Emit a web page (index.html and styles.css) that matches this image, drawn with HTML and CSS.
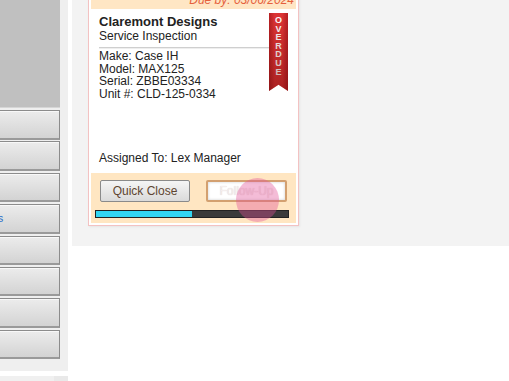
FILE: index.html
```html
<!DOCTYPE html>
<html lang="en">
<head>
  <meta charset="UTF-8" />
  <meta name="viewport" content="width=device-width, initial-scale=1.0"/>
  <title>Work Orders</title>
  <link rel="stylesheet" href="styles.css">
</head>
<body>
  <div class="page">

    <aside class="sidebar">
      <div class="sidebar-panel">
        <div class="sidebar-top"></div>
        <div class="nav">
          <div class="nav-btn"></div>
          <div class="nav-btn"></div>
          <div class="nav-btn"></div>
          <div class="nav-btn"><span class="nav-label">Forms</span></div>
          <div class="nav-btn"></div>
          <div class="nav-btn"></div>
          <div class="nav-btn"></div>
          <div class="nav-btn"></div>
        </div>
      </div>
      <div class="sidebar-panel sidebar-bottom"></div>
    </aside>

    <main class="content">
      <!-- Work order card -->
      <div class="card">
        <div class="card-header">Due by: 03/06/2024</div>

        <div class="card-body">
          <div class="card-title">
            <div class="company">Claremont Designs</div>
            <div class="service">Service Inspection</div>
          </div>
          <div class="details">
            <div>Make: Case IH</div>
            <div>Model: MAX125</div>
            <div>Serial: ZBBE03334</div>
            <div>Unit #: CLD-125-0334</div>
          </div>
          <div class="assigned">Assigned To: Lex Manager</div>
        </div>

        <div class="ribbon">
          <span>O</span><span>V</span><span>E</span><span>R</span><span>D</span><span>U</span><span>E</span>
        </div>

        <div class="card-footer">
          <div class="actions">
            <button class="btn btn-close">Quick Close</button>
            <button class="btn btn-follow" disabled>Follow-Up</button>
          </div>
          <div class="progress"><div class="progress-fill" style="width: 50%"></div></div>
          <div class="tap"></div>
        </div>
      </div>
    </main>

  </div>
</body>
</html>
```

FILE: styles.css
```css
body {
  margin: 0;
  font-family: "Liberation Sans", Arial, sans-serif;
  background: #fff;
  overflow: hidden;
}

.page {
  display: flex;
  align-items: flex-start;
  gap: 4px;
}

/* left column */
.sidebar {
  width: 68px;
  display: flex;
  flex-direction: column;
  gap: 5px;
}

.sidebar-panel {
  background: #efefef;
  height: 371px;
  padding-right: 8px;
  box-sizing: border-box;
}

.sidebar-bottom {
  height: 20px;
  background: linear-gradient(to right, #f0f0f0 80%, #e9e9e9 80%);
}

.sidebar-top {
  height: 107px;
  background: #c0c0c0;
  border-bottom: 1px solid #d6d6d6;
  margin-bottom: 2px;
}

.nav {
  display: flex;
  flex-direction: column;
  gap: 1.9px;
  margin-left: -2px;
}

.nav-btn {
  height: 29.5px;
  box-sizing: border-box;
  border: 1px solid #8c8c8c;
  border-bottom: 2px solid #9a9a9a;
  background: linear-gradient(#ececec, #d3d3d3);
  box-shadow: inset 1px 1px 0 #f8f8f8;
  display: flex;
  align-items: center;
  overflow: hidden;
}

.nav-label {
  font-size: 11px;
  color: #2a6fc9;
  margin-left: -27px;
}

/* main area */
.content {
  flex: 1;
  height: 246px;
  background: #f3f3f3;
  padding-left: 16px;
}

.card {
  position: relative;
  width: 211px;
  box-sizing: border-box;
  margin-top: -12px;
  border: 1px solid #f3c2c2;
  padding: 2px;
  background: #fff;
  box-shadow: 1px 1px 2px rgba(0,0,0,0.06);
}

.card-header {
  height: 18px;
  line-height: 18px;
  background: #ffe6c4;
  color: #e5603c;
  font-size: 12px;
  font-style: italic;
  text-align: right;
  padding-right: 2px;
}

.card-body {
  height: 164px;
  box-sizing: border-box;
  display: flex;
  flex-direction: column;
  padding: 5px 8px 9px;
  color: #222;
}

.card-title {
  margin-right: 19px;
  border-bottom: 1px solid #cfcfcf;
  box-shadow: 0 1px 0 #eee;
  padding-bottom: 4px;
  margin-bottom: 2px;
}

.company {
  font-size: 13px;
  font-weight: bold;
  line-height: 15px;
}

.service {
  font-size: 12px;
  line-height: 14px;
}

.details {
  font-size: 12px;
  line-height: 12.5px;
}

.assigned {
  margin-top: auto;
  font-size: 12px;
  line-height: 12.5px;
}

.ribbon {
  position: absolute;
  top: 24px;
  right: 10px;
  width: 19px;
  height: 78px;
  padding-top: 3px;
  box-sizing: border-box;
  background: linear-gradient(to right, #b51f22, #dc3434 30%, #dc3434 70%, #b51f22);
  clip-path: polygon(0 0, 100% 0, 100% 100%, 50% 92%, 0 100%);
  display: flex;
  flex-direction: column;
  align-items: center;
  color: #fff;
  font-size: 9px;
  font-weight: bold;
  line-height: 8.6px;
}

.ribbon::after {
  content: "";
  position: absolute;
  inset: 0;
  background: linear-gradient(rgba(0,0,0,0), rgba(80,0,0,0.35));
}

.card-footer {
  position: relative;
  height: 50px;
  box-sizing: border-box;
  background: #ffe6c2;
  padding: 7px 7px 0 4px;
}

.actions {
  display: flex;
  justify-content: space-between;
  padding: 0 2px 0 5px;
}

.btn {
  height: 22px;
  font-family: "Liberation Sans", Arial, sans-serif;
  font-size: 12px;
  border-radius: 2px;
  padding: 0;
}

.btn-close {
  width: 90px;
  border: 1px solid #8a8a8a;
  background: linear-gradient(#f5f5f5, #dadada);
  color: #5e4530;
}

.btn-follow {
  width: 81px;
  border: 2px solid #d3a070;
  background: #fff;
  box-shadow: inset 0 0 3px rgba(0,0,0,0.2);
  color: #f4eeee;
  text-shadow: 0 0 1px #d8c8c8;
}

.progress {
  margin-top: 8px;
  height: 8px;
  box-sizing: border-box;
  border: 1px solid #222;
  background: #3a3a3a;
}

.progress-fill {
  height: 100%;
  background: #33d6f2;
}

.tap {
  position: absolute;
  left: 145px;
  top: 5px;
  width: 43px;
  height: 44px;
  border-radius: 50%;
  background: rgba(225, 80, 150, 0.38);
}
```
